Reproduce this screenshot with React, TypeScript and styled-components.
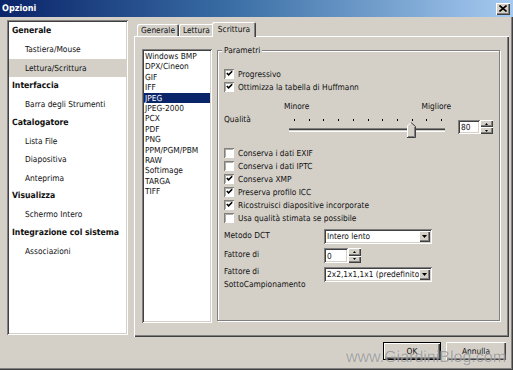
import React from 'react';
import styled, { createGlobalStyle } from 'styled-components';

const face = '#d4d0c8';
const shadow = '#808080';
const dark = '#404040';

const GlobalStyle = createGlobalStyle`
  html, body {
    margin: 0;
    padding: 0;
    background: ${face};
  }
  body {
    font-family: "DejaVu Sans Condensed", "DejaVu Sans", sans-serif;
    font-stretch: condensed;
    font-size: 8.3px;
    color: #111;
    text-rendering: geometricPrecision;
  }
  * {
    box-sizing: border-box;
  }
`;

const sunken = `box-shadow: inset 1px 1px 0 ${shadow}, inset -1px -1px 0 #fff, inset 2px 2px 0 ${dark}, inset -2px -2px 0 ${face};`;
const raised = `box-shadow: inset 1px 1px 0 #fff, inset -1px -1px 0 ${dark}, inset -2px -2px 0 ${shadow};`;

const Window = styled.div`
  position: relative;
  width: 513px;
  height: 370px;
  background: ${face};
  display: flex;
  flex-direction: column;
  overflow: hidden;
  box-shadow: inset -1px -1px 0 ${dark}, inset -2px -2px 0 ${shadow};
`;

const TitleBar = styled.div`
  height: 17px;
  flex-shrink: 0;
  display: flex;
  align-items: center;
  justify-content: space-between;
  padding: 0 3px 0 2px;
  background: linear-gradient(to right, #0a246a, #3a6ea5 45%, #a6caf0);
`;

const TitleText = styled.span`
  color: #fff;
  font-weight: bold;
  font-size: 9px;
`;

const CloseButton = styled.div`
  width: 14px;
  height: 12px;
  background: ${face};
  ${raised}
  display: flex;
  align-items: center;
  justify-content: center;
`;

const Main = styled.div`
  display: flex;
  gap: 6px;
  padding: 3px 4px 0 7px;
  height: 320px;
`;

const Tree = styled.div`
  width: 121px;
  height: 315px;
  background: #fff;
  ${sunken}
  padding: 2px;
  display: flex;
  flex-direction: column;
`;

const TreeRow = styled.div<{ $level: number; $selected?: boolean }>`
  height: 18.33px;
  flex-shrink: 0;
  display: flex;
  align-items: center;
  padding-left: ${(p) => (p.$level === 0 ? 3 : 16)}px;
  font-weight: ${(p) => (p.$level === 0 ? 'bold' : 'normal')};
  font-size: ${(p) => (p.$level === 0 ? 8.6 : 8.3)}px;
  background: ${(p) => (p.$selected ? face : 'transparent')};
  white-space: nowrap;
`;

const TabArea = styled.div`
  width: 375px;
  display: flex;
  flex-direction: column;
`;

const TabStrip = styled.div`
  height: 16px;
  display: flex;
  align-items: flex-end;
  padding-left: 3px;
`;

const Tab = styled.div<{ $active?: boolean }>`
  position: relative;
  z-index: ${(p) => (p.$active ? 1 : 0)};
  height: ${(p) => (p.$active ? 15 : 12)}px;
  margin: ${(p) => (p.$active ? '0 -2px -1px -2px' : '0')};
  padding: ${(p) => (p.$active ? '2px 6px 0' : '1px 4px 0')};
  background: ${face};
  border-radius: 2px 2px 0 0;
  box-shadow: inset 1px 1px 0 #fff, inset -1px 0 0 ${dark}, inset -2px 0 0 ${shadow};
  white-space: nowrap;
  line-height: 10px;
`;

const TabPanel = styled.div`
  flex: 1;
  display: flex;
  gap: 5px;
  padding: 13px 9px 14px 8px;
  background: ${face};
  box-shadow: inset 1px 1px 0 #fff, inset -1px -1px 0 ${dark}, inset -2px -2px 0 ${shadow};
`;

const ListBox = styled.div`
  width: 71px;
  background: #fff;
  ${sunken}
  padding: 2px;
  display: flex;
  flex-direction: column;
`;

const ListItem = styled.div<{ $selected?: boolean }>`
  height: 10.4px;
  line-height: 10.4px;
  padding-left: 1px;
  background: ${(p) => (p.$selected ? '#0a246a' : 'transparent')};
  color: ${(p) => (p.$selected ? '#fff' : 'inherit')};
  white-space: nowrap;
`;

const Group = styled.div`
  position: relative;
  flex: 1;
  margin: 1px 0 2px;
  border: 1px solid ${shadow};
  box-shadow: inset 1px 1px 0 #fff, 1px 1px 0 #fff;
  padding: 16px 6px 0 6px;
  display: flex;
  flex-direction: column;
`;

const Legend = styled.span`
  position: absolute;
  top: -6px;
  left: 4px;
  padding: 0 2px;
  line-height: 11px;
  background: ${face};
`;

const CheckRow = styled.div`
  height: 13px;
  display: flex;
  align-items: center;
  gap: 4px;
  white-space: nowrap;
`;

const CheckBox = styled.span`
  width: 10px;
  height: 10px;
  flex-shrink: 0;
  background: #fff;
  box-shadow: inset 1px 1px 0 ${shadow}, inset -1px -1px 0 #fff, inset 2px 2px 0 #b0aca4;
  display: flex;
  align-items: center;
  justify-content: center;
`;

const ScaleLabels = styled.div`
  margin: 6px 0 0 60px;
  width: 167px;
  height: 13px;
  display: flex;
  justify-content: space-between;
  align-items: center;
`;

const QualityRow = styled.div`
  display: flex;
  height: 26px;
`;

const QualityLabel = styled.span`
  width: 65px;
  line-height: 13px;
  padding-top: 1px;
`;

const Spin = styled.div<{ $width: number; $height: number; $top?: number }>`
  display: flex;
  height: ${(p) => p.$height}px;
  margin-top: ${(p) => p.$top ?? 0}px;
  margin-left: ${(p) => (p.$top ? 13 : 0)}px;
  & > span:first-child {
    width: ${(p) => p.$width}px;
  }
`;

const SpinInput = styled.span`
  background: #fff;
  ${sunken}
  padding: 0 3px;
  display: flex;
  align-items: center;
`;

const SpinButtons = styled.div`
  width: 13px;
  display: flex;
  flex-direction: column;
`;

const SpinButton = styled.div`
  flex: 1;
  background: ${face};
  ${raised}
  display: flex;
  align-items: center;
  justify-content: center;
`;

const Checks = styled.div`
  margin-top: 8px;
  display: flex;
  flex-direction: column;
`;

const FieldRow = styled.div<{ $top: number }>`
  display: flex;
  align-items: flex-start;
  margin-top: ${(p) => p.$top}px;
`;

const FieldLabel = styled.div<{ $clip?: number; $shift?: number }>`
  width: 100px;
  line-height: 13px;
  margin-top: ${(p) => p.$shift ?? 0}px;
  ${(p) => (p.$clip ? `height: ${p.$clip}px; overflow: hidden;` : '')}
`;

const Combo = styled.div`
  width: 108px;
  height: 15px;
  display: flex;
  background: #fff;
  ${sunken}
  padding: 2px;
`;

const ComboText = styled.span`
  flex: 1;
  padding-left: 1px;
  overflow: hidden;
  white-space: nowrap;
  line-height: 11px;
`;

const ComboArrow = styled.span`
  width: 11px;
  background: ${face};
  ${raised}
  display: flex;
  align-items: center;
  justify-content: center;
`;

const Footer = styled.div`
  flex: 1;
  display: flex;
  justify-content: flex-end;
  gap: 5px;
  padding: 5px 7px 0 0;
`;

const Button = styled.div<{ $default?: boolean }>`
  width: ${(p) => (p.$default ? 58 : 60)}px;
  height: 18px;
  display: flex;
  align-items: center;
  justify-content: center;
  background: ${face};
  box-shadow: ${(p) =>
    p.$default
      ? `inset 0 0 0 1px #000, inset 2px 2px 0 #fff, inset -2px -2px 0 ${dark}, inset -3px -3px 0 ${shadow}`
      : `inset 1px 1px 0 #fff, inset -1px -1px 0 ${dark}, inset -2px -2px 0 ${shadow}`};
`;

const Watermark = styled.div`
  position: absolute;
  right: 7px;
  bottom: 3px;
  font-family: "Liberation Sans", Arial, sans-serif;
  font-size: 16px;
  line-height: 18px;
  color: rgba(110, 110, 110, 0.6);
  text-shadow: 0 0 1px rgba(255, 255, 255, 0.7);
  pointer-events: none;
`;

const treeItems = [
  { label: 'Generale', level: 0 },
  { label: 'Tastiera/Mouse', level: 1 },
  { label: 'Lettura/Scrittura', level: 1, selected: true },
  { label: 'Interfaccia', level: 0 },
  { label: 'Barra degli Strumenti', level: 1 },
  { label: 'Catalogatore', level: 0 },
  { label: 'Lista File', level: 1 },
  { label: 'Diapositiva', level: 1 },
  { label: 'Anteprima', level: 1 },
  { label: 'Visualizza', level: 0 },
  { label: 'Schermo Intero', level: 1 },
  { label: 'Integrazione col sistema', level: 0 },
  { label: 'Associazioni', level: 1 },
];

const formats = [
  'Windows BMP',
  'DPX/Cineon',
  'GIF',
  'IFF',
  'JPEG',
  'JPEG-2000',
  'PCX',
  'PDF',
  'PNG',
  'PPM/PGM/PBM',
  'RAW',
  'Softimage',
  'TARGA',
  'TIFF',
];

const topChecks = [
  { label: 'Progressivo', checked: true },
  { label: 'Ottimizza la tabella di Huffmann', checked: true },
];

const moreChecks = [
  { label: 'Conserva i dati EXIF', checked: false },
  { label: 'Conserva i dati IPTC', checked: false },
  { label: 'Conserva XMP', checked: true },
  { label: 'Preserva profilo ICC', checked: true },
  { label: 'Ricostruisci diapositive incorporate', checked: true },
  { label: 'Usa qualità stimata se possibile', checked: false },
];

const Tick = () => (
  <svg width="7" height="7" viewBox="0 0 7 7">
    <polyline points="0.8,3 2.6,4.9 6.2,1.2" fill="none" stroke="#000" strokeWidth="1.6" />
  </svg>
);

const Check = ({ label, checked }: { label: string; checked: boolean }) => (
  <CheckRow>
    <CheckBox>{checked && <Tick />}</CheckBox>
    <span>{label}</span>
  </CheckRow>
);

const Arrow = ({ up, w = 5, h = 3 }: { up?: boolean; w?: number; h?: number }) => (
  <svg width={w} height={h} viewBox={`0 0 ${w} ${h}`}>
    <polygon points={up ? `0,${h} ${w / 2},0 ${w},${h}` : `0,0 ${w},0 ${w / 2},${h}`} fill="#000" />
  </svg>
);

const SpinBox = ({ value, width, height, top }: { value: string; width: number; height: number; top?: number }) => (
  <Spin $width={width} $height={height} $top={top}>
    <SpinInput>{value}</SpinInput>
    <SpinButtons>
      <SpinButton>
        <Arrow up w={3} h={2} />
      </SpinButton>
      <SpinButton>
        <Arrow w={3} h={2} />
      </SpinButton>
    </SpinButtons>
  </Spin>
);

const QualitySlider = ({ value }: { value: number }) => {
  const step = 14.7;
  const ticks = Array.from({ length: 11 }, (_, i) => 5 + i * step);
  const cx = 5 + (value / 100) * step * 10;
  const x = Math.round(cx - 4.5);
  return (
    <svg width="156" height="26" viewBox="0 0 156 26">
      {ticks.map((t) => (
        <rect key={t} x={Math.round(t)} y="7" width="1" height="2" fill="#000" />
      ))}
      <rect x="0" y="16" width="156" height="1" fill={shadow} />
      <rect x="0" y="17" width="156" height="1" fill={dark} />
      <rect x="0" y="18" width="156" height="1" fill={face} />
      <rect x="0" y="19" width="156" height="1" fill="#fff" />
      <g transform={`translate(${x},10)`}>
        <polygon points="0,4 4,0 8,4 8,15 0,15" fill={face} />
        <polyline points="0.5,15 0.5,4 4,0.5" fill="none" stroke="#fff" strokeWidth="1" />
        <polyline points="4,0.5 8.5,4.5 8.5,15.5 0,15.5" fill="none" stroke={dark} strokeWidth="1" />
        <polyline points="7.5,5 7.5,14.5 1,14.5" fill="none" stroke={shadow} strokeWidth="1" />
      </g>
    </svg>
  );
};

const ComboBox = ({ value }: { value: string }) => (
  <Combo>
    <ComboText>{value}</ComboText>
    <ComboArrow>
      <Arrow w={5} h={3} />
    </ComboArrow>
  </Combo>
);

export default function App() {
  return (
    <>
      <GlobalStyle />
      <Window>
        <TitleBar>
          <TitleText>Opzioni</TitleText>
          <CloseButton>
            <svg width="8" height="7" viewBox="0 0 8 7">
              <path d="M0.5 0.5 L7.5 6.5 M7.5 0.5 L0.5 6.5" stroke="#000" strokeWidth="1.6" />
            </svg>
          </CloseButton>
        </TitleBar>
        <Main>
          <Tree>
            {treeItems.map((item) => (
              <TreeRow key={item.label} $level={item.level} $selected={item.selected}>
                {item.label}
              </TreeRow>
            ))}
          </Tree>
          <TabArea>
            <TabStrip>
              <Tab>Generale</Tab>
              <Tab>Lettura</Tab>
              <Tab $active>Scrittura</Tab>
            </TabStrip>
            <TabPanel>
              <ListBox>
                {formats.map((f) => (
                  <ListItem key={f} $selected={f === 'JPEG'}>
                    {f}
                  </ListItem>
                ))}
              </ListBox>
              <Group>
                <Legend>Parametri</Legend>
                {topChecks.map((c) => (
                  <Check key={c.label} {...c} />
                ))}
                <ScaleLabels>
                  <span>Minore</span>
                  <span>Migliore</span>
                </ScaleLabels>
                <QualityRow>
                  <QualityLabel>Qualità</QualityLabel>
                  <QualitySlider value={80} />
                  <SpinBox value="80" width={22} height={14} top={8} />
                </QualityRow>
                <Checks>
                  {moreChecks.map((c) => (
                    <Check key={c.label} {...c} />
                  ))}
                </Checks>
                <FieldRow $top={5}>
                  <FieldLabel>Metodo DCT</FieldLabel>
                  <ComboBox value="Intero lento" />
                </FieldRow>
                <FieldRow $top={4}>
                  <FieldLabel $clip={14}>
                    Fattore di
                    <br />
                    Compressione
                  </FieldLabel>
                  <SpinBox value="0" width={24} height={15} />
                </FieldRow>
                <FieldRow $top={4}>
                  <FieldLabel $shift={-2}>
                    Fattore di
                    <br />
                    SottoCampionamento
                  </FieldLabel>
                  <ComboBox value="2x2,1x1,1x1 (predefinito)" />
                </FieldRow>
              </Group>
            </TabPanel>
          </TabArea>
        </Main>
        <Footer>
          <Button $default>OK</Button>
          <Button>Annulla</Button>
        </Footer>
        <Watermark>www.GiardiniBlog.com</Watermark>
      </Window>
    </>
  );
}
